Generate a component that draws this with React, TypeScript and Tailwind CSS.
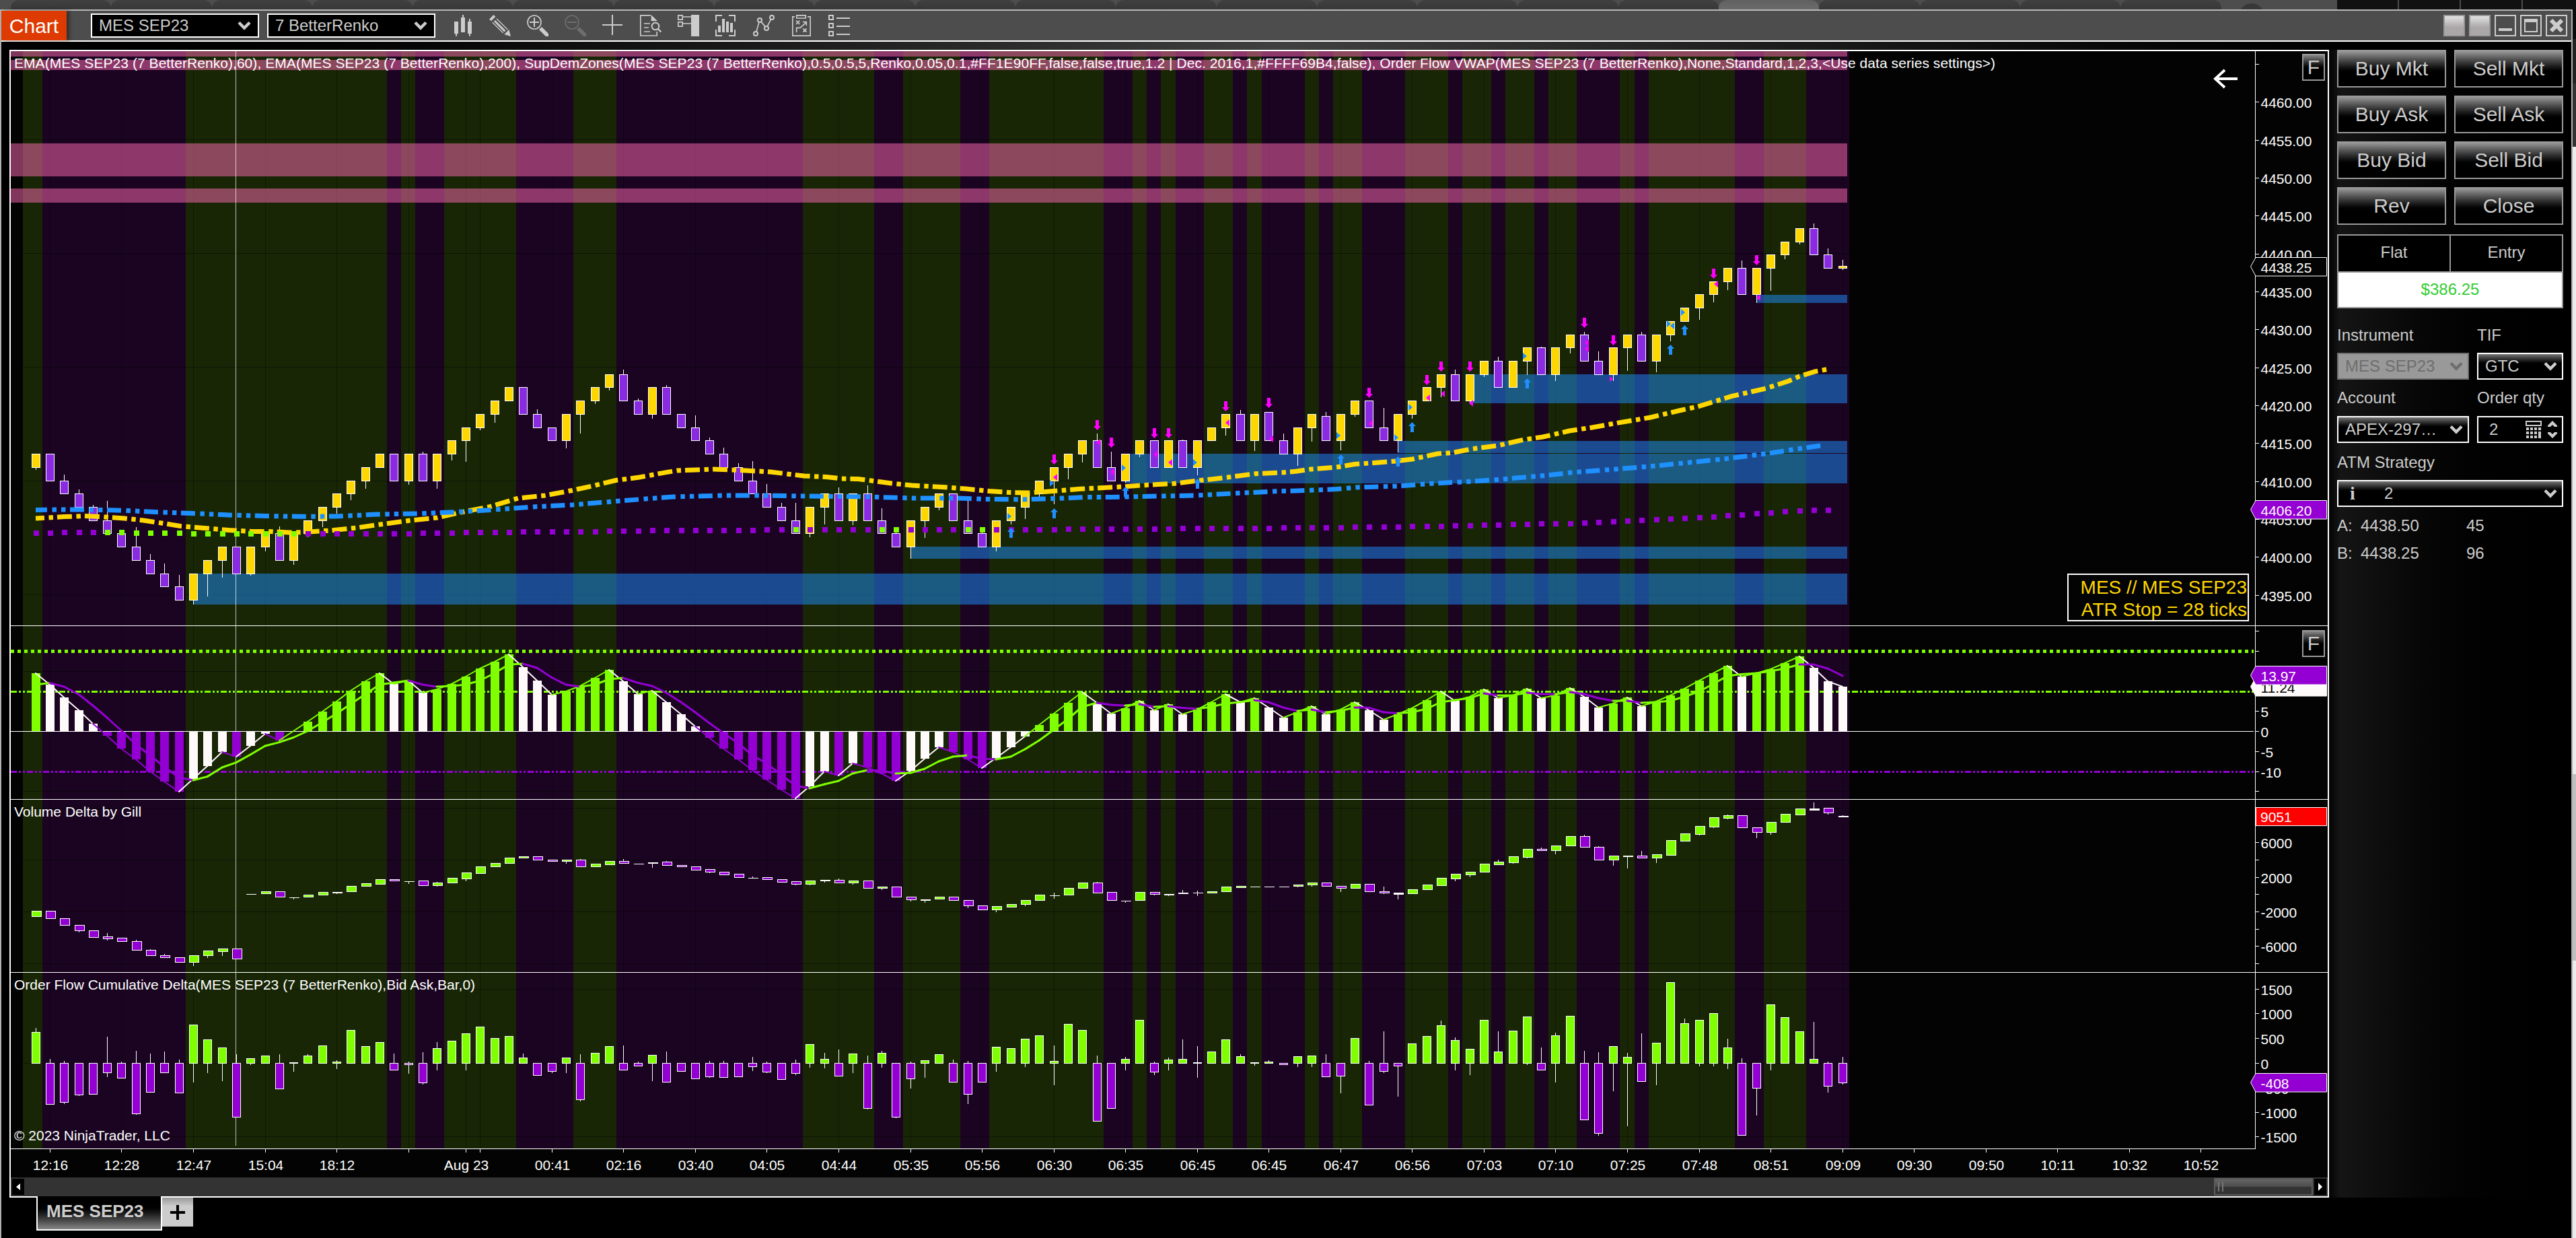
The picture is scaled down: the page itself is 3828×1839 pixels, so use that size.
import type { ReactNode } from "react";

const STEP = 21.31;
const LEFT = 16;
const AXIS = 3351;
const barX = (i: number) => Math.round(52.6 + i * STEP);

const GREEN = "#7fff00";
const PURPLE = "#9400d3";
const SNOW = "#fffafa";

// lengths of the alternating green / purple background runs, in bars
const runs = [
  1, 10, 14, 1, 1, 2, 5, 4, 3, 13, 5, 2, 4, 2, 8, 2, 1, 1, 1, 2, 2, 1, 1, 3, 1, 1, 2, 3, 3, 1, 2, 1, 2, 1, 2, 3, 1, 1,
  6, 2, 3, 3,
];

// renko bars: [up, bottom brick, top brick, upper wick, lower wick]
const bricks: number[][] = [
  [1, 10, 11, 0, 3], [0, 9, 11, 0, 0], [0, 8, 9, 10, 0], [0, 7, 8, 7, 0], [0, 6, 7, 4, 0], [0, 5, 6, 30, 0],
  [0, 4, 5, 0, 0], [0, 3, 4, 30, 0], [0, 2, 3, 10, 0], [0, 1, 2, 16, 0], [0, 0, 1, 18, 0], [1, 0, 2, 0, 6],
  [1, 2, 3, 0, 33], [1, 3, 4, 0, 25], [0, 2, 4, 0, 0], [1, 2, 4, 0, 2], [1, 4, 5, 0, 6], [0, 3, 5, 11, 0],
  [1, 3, 5, 0, 6], [1, 5, 6, 0, 5], [1, 6, 7, 0, 9], [1, 7, 8, 0, 9], [1, 8, 9, 0, 9], [1, 9, 10, 0, 11],
  [1, 10, 11, 0, 0], [0, 9, 11, 0, 0], [1, 9, 11, 0, 5], [0, 9, 11, 4, 0], [1, 9, 11, 0, 11], [1, 11, 12, 0, 9],
  [1, 12, 13, 0, 31], [1, 13, 14, 0, 3], [1, 14, 15, 0, 12], [1, 15, 16, 0, 0], [0, 14, 16, 0, 0], [0, 13, 14, 8, 0],
  [0, 12, 13, 0, 0], [1, 12, 14, 0, 11], [1, 14, 15, 0, 28], [1, 15, 16, 0, 4], [1, 16, 17, 0, 4], [0, 15, 17, 8, 0],
  [0, 14, 15, 4, 0], [1, 14, 16, 0, 6], [0, 14, 16, 4, 0], [0, 13, 14, 0, 0], [0, 12, 13, 19, 0], [0, 11, 12, 5, 0],
  [0, 10, 11, 10, 0], [0, 9, 10, 7, 0], [0, 8, 9, 30, 0], [0, 7, 8, 15, 0], [0, 6, 7, 7, 0], [0, 5, 6, 27, 0],
  [1, 5, 7, 0, 5], [1, 7, 8, 0, 25], [0, 6, 8, 10, 0], [1, 6, 8, 0, 6], [0, 6, 8, 13, 0], [0, 5, 6, 19, 0],
  [0, 4, 5, 2, 0], [1, 4, 6, 0, 17], [1, 6, 7, 0, 25], [1, 7, 8, 0, 4], [0, 6, 8, 0, 0], [0, 5, 6, 30, 0],
  [0, 4, 5, 2, 0], [1, 4, 6, 0, 6], [1, 6, 7, 0, 5], [1, 7, 8, 0, 17], [1, 8, 9, 0, 9], [1, 9, 10, 0, 34],
  [1, 10, 11, 0, 17], [1, 11, 12, 0, 12], [0, 10, 12, 11, 0], [0, 9, 10, 24, 0], [1, 9, 11, 0, 2], [1, 11, 12, 0, 4],
  [0, 10, 12, 0, 0], [1, 10, 12, 0, 0], [0, 10, 12, 2, 0], [1, 10, 12, 0, 11], [1, 12, 13, 0, 0], [1, 13, 14, 0, 11],
  [0, 12, 14, 7, 0], [1, 12, 14, 0, 15], [0, 12, 14.15, 1, 0], [0, 11, 12, 11, 0], [1, 11, 13, 0, 17], [1, 13, 14, 0, 20],
  [0, 12, 13.85, 7, 0], [1, 12, 14, 0, 14], [1, 14, 15, 0, 3], [0, 13, 15, 0, 0], [0, 12, 13, 30, 0], [1, 12, 14, 0, 17],
  [1, 14, 15, 0, 6], [1, 15, 16, 0, 0], [1, 16, 17, 0, 14], [0, 15, 17, 8, 0], [1, 15, 17, 0, 2], [1, 17, 18, 0, 3],
  [0, 16, 18, 7, 0], [1, 16, 18, 0, 0], [1, 18, 19, 0, 20], [0, 17, 19, 2, 0], [1, 17, 19, 0, 9], [1, 19, 20, 0, 8],
  [0, 18, 20, 5, 0], [0, 17, 18, 15, 0], [1, 17, 19, 0, 9], [1, 19, 20, 0, 34], [0, 18, 20, 5, 0], [1, 18, 20, 0, 16],
  [1, 20, 21, 0, 9], [1, 21, 22, 0, 0], [1, 22, 23, 0, 17], [1, 23, 24, 0, 11], [1, 24, 25, 0, 12], [0, 23, 25, 12, 0],
  [1, 23, 25, 0, 12], [1, 25, 26, 0, 33], [1, 26, 27, 0, 6], [1, 27, 28, 0, 3], [0, 26, 28, 8, 0], [0, 25, 26, 10, 0],
  [1, 25, 25.15, 10, 2],
];
const brickY = (k: number) => Math.round(892 - k * 19.72);

const demandZones = [
  [287, 852, 46],
  [1353, 812, 18],
  [1672, 674, 44],
  [2077, 655, 18],
  [2184, 556, 43],
  [2610, 438, 12],
];
const supplyZones = [
  [76, 8],
  [89, 15],
  [213, 49],
  [280, 21],
];

const ema60 =
  "53,770 95,767.6 125,766.5 150,767.6 185,770 213,773 240,777 268,781.5 310,785 340,787.5 374,789.4 400,789.4 430,791 450,790.6 490,788 530,784 565,779 610,773 650,769 685,761 728,752.6 770,740 810,736 850,728.5 880,722 915,713.5 950,709 990,701.6 1006,699 1060,697 1100,698.5 1145,701 1195,707 1228,708.4 1250,711 1275,711.5 1292,713.6 1325,718 1355,721 1400,723.5 1435,726 1470,729.6 1500,731.5 1530,732 1565,729.6 1605,726.3 1660,723.5 1700,720.7 1745,718.3 1780,714 1810,710.8 1840,707 1865,703.7 1905,702 1927,700 1948,697 1988,693.7 2013,689.6 2035,688 2074,685 2099,682 2136,674 2158,672.6 2186,667 2225,662 2265,653 2293,649 2332,640 2366,635 2399,629 2453,620 2495,610 2523,604 2573,588.7 2624,577 2658,566 2674,559 2697,552 2718,548";
const ema200 =
  "53,757.4 90,757 125,757 165,757.8 190,758.6 230,760.5 285,762.5 340,765 395,766.5 450,767.3 500,767 560,764 620,763 680,760.5 730,757.4 790,753 850,750 910,745 960,741 1000,738 1075,736 1130,736 1180,736.7 1290,738 1355,740 1420,740 1460,741.4 1520,742 1570,740.5 1610,738.6 1650,738.6 1690,737.7 1780,735.8 1840,732.5 1900,729.6 1927,729 1986,726.6 2015,724 2080,722 2130,718 2190,715 2225,712.5 2300,706 2340,701.4 2400,697 2450,693 2510,687 2560,682 2624,674 2670,667 2712,661";

// vwap anchors, [bar, y]
const vwap = [
  [0, 792], [3, 791], [5, 791], [12, 793], [18, 792.5], [19, 793], [25, 793], [32, 790.6], [38, 790], [44, 788], [56, 787],
  [66, 787], [76, 786], [86, 784.5], [91, 783.5], [97, 782], [101, 780], [107, 777.7], [112, 773], [116, 769], [120, 763],
  [123, 759], [125, 757.7],
];
const vwapUp = [53, 59, 60, 65, 66];
const vwapY = (i: number) => {
  const n = vwap.findIndex((p) => p[0] >= i);
  if (n <= 0) return vwap[0][1];
  const [a, b] = [vwap[n - 1], vwap[n]];
  return a[1] + ((b[1] - a[1]) * (i - a[0])) / (b[0] - a[0]);
};

const sells = [
  [71, 675], [74, 624], [75, 650], [78, 636], [79, 636], [83, 596], [86, 591], [93, 576], [97, 557], [98, 537],
  [100, 537], [108, 472], [110, 498], [117, 399], [120, 379],
];
const buys = [
  [68, 784], [71, 755], [76, 723], [81, 711], [91, 675], [95, 678], [96, 627], [104, 562], [114, 512], [115, 483],
];
const sellFills = [
  [1568, 709], [1632, 657], [1653, 701], [1717, 675], [1739, 687], [1824, 628], [1889, 652], [2037, 629], [2122, 591],
  [2144, 585], [2186, 599], [2358, 509], [2358, 518], [2550, 422], [2613, 442],
];
const buyFills = [
  [1500, 767], [1563, 718], [1670, 695], [1776, 687], [1989, 647], [2075, 650], [2096, 605], [2266, 529], [2480, 481],
  [2501, 464],
];

// oscillator: [color key, height above zero in px]
const hist =
  "g86 w69 w50 w31 w11 p-7 p-26 p-42 p-60 p-75 p-90 w-71 w-52 w-31 p-38 w-22 w-4 p-14 g0 g14 g29 g44 g60 g74 g86 w70 g75 w57 g62 g70 g81 g93 g103 g114 w95 w75 w54 g59 g67 g79 g91 w74 w55 g60 w43 w25 w7 p-10 p-26 p-42 p-58 p-72 p-87 p-100 w-82 w-60 p-66 w-48 p-54 p-63 p-74 w-59 w-41 w-24 p-31 p-42 p-55 w-40 w-24 w-8 g9 g26 g42 g58 w42 w26 g34 g45 w31 g40 w25 g32 g43 g55 w43 g49 w35 w20 g28 g37 w25 g32 g43 w31 w17 g25 g34 g46 g59 w45 g51 g62 w49 g53 g63 w49 g53 g64 w51 w35 g41 g50 w37 g44 g53 g63 g75 g86 g97 w81 g86 g92 g101 g111 w94 w74 w66"
    .split(" ")
    .map((t) => ({ c: t[0] === "g" ? GREEN : t[0] === "w" ? SNOW : PURPLE, v: Number(t.slice(1)) }));
const signal = [
  69, 71.5, 66, 54.5, 38, 20, 1, -20, -36, -53, -69, -73, -67.6, -54, -46.6, -35, -22, -16.6, -9.5, 0, 13, 26, 40, 55, 69,
  72, 75, 69, 66, 67, 69, 75, 86, 99, 100, 94, 79.5, 69, 66, 69, 77, 79, 71.6, 67, 57, 43, 28, 12, -3, -18, -36, -48, -65,
  -81, -85, -79, -74, -63, -58, -59, -63, -62, -56, -45, -38, -36, -41, -42, -38, -27, -14, 2, 18, 36, 42, 39, 38, 40, 36,
  37, 34.5, 33, 36, 41, 43, 46, 43, 35, 30, 32, 28, 30, 35, 34.8, 28, 26.4, 28, 33, 43, 46, 49, 56, 53, 53.1, 57, 55, 54.8,
  58, 55, 49, 45, 45.1, 42, 43, 45, 51, 59, 70, 82, 84.5, 86, 89, 93, 99, 98.9, 93, 82,
];

// cumulative volume delta bars: color, top, bottom, upper wick, lower wick
const volume =
  "g415,434 p415,441 p441,465 p465,484,0,4 p484,506 p505,511,15,4 p510,520 p520,551,6 p551,570,4 p570,577,6 p577,594 g570,594,0,13 g555,570,0,8 g546,556,0,14 p546,582 w351,353,0,3 g346,351 p346,363,3 w363,363,0,6 g358,363 g348,358 w346,348,0,4 g327,346 g317,327 g303,318 p303,308,3 w308,308,0,9 p308,323,3 g313,323,4,4 g298,313 g279,299,0,6 g258,280 g244,258 g227,244 g222,227 p222,232 p232,237 g232,237,0,6 p232,256,4 g248,256 g239,249 p239,244,10 w244,244 w241,243,0,16 p241,251,5 p251,258 p258,268 p267,275,0,3 p275,285 p284,294 w294,296,4,4 p296,301 p301,311 p310,318,0,3 g306,318,0,3 w303,305,0,7 p304,313,6 g306,313,0,5 p306,334 g329,334,0,4 p329,363 p363,373,0,5 w370,373,0,10 g365,370 p365,377 p377,396,0,8 p396,408 g398,408,0,6 g389,399 g375,389,0,4 g358,375 w356,358,9,13 g332,356 g313,332 p313,349,4 p348,377 w375,376,0,7 g348,375 p348,354,0,3 w351,354,0,5 w348,350,10 w348,348,8,11 g344,349 g329,344 g325,330 w325,325,0,3 w325,325 w325,325 g320,325,0,3 g315,320,0,4 p315,325,3 p325,332,0,13 g318,332 p318,344 p344,349,18,3 w347,351,0,20 g339,351 g322,339 g298,323 g284,299,0,6 g275,285,0,8 g248,275 g241,249,10 g222,242,0,3 g194,223,0,3 p194,199,8 g182,199,0,13 g151,182 p151,187,6 p187,232,4 g220,232,0,18 w217,219,0,44 p218,227,18 g215,227,0,16 g165,216 g141,166,3 g115,142,0,3 g84,116,0,3 g75,85,4,3 p75,120 p120,135,0,20 g101,135,0,8 g72,101 g53,73 w51,54,22 p51,66,0,5 w77,78,3"
    .split(" ")
    .map((t) => ({ key: t[0], n: t.slice(1).split(",").map((v) => Number(v) / 2.379) }));

// order flow delta per bar: close, high, low
const flow =
  "110,123 -145,14 -138,6,-144 -112,0,-117 -109,0,-113 -33,92,-51 -52,5 -179,42,-182 -102,33,-105 -33,40,-36 -104,11 136,0,-70 84,0,-36 55,0,-65 -190,30 17,0,-8 27 -90,30 3,0,-32 27,30 62 5,9,-22 117 60 74 -24,33,-27 -5,4,-39 -69,37,-75 53,73,-25 79 105,0,-27 129 89 96 20,33 -43,0,-46 -28,0,-36 20,0,-36 -128,30,-136 36 60 -24,61 -9,4 29,0,-65 -67,40 -28 -54 -47,6,-53 -49,6,-53 -47 -12,21,-29 -31,4,-36 -57 -35,11,-43 67,0,-17 15,35,-20 -45,47 34,0,-36 -159,25,-163 36,42,-17 -190,0,-196 -54,4,-91 10,0,-53 32 -67,11 -109,6,-144 -67,0,-70 58,0,-32 53 86,0,-15 98 8,61,-79 139 117 -204,25,-208 -159 15,21,-27 153 -31,4,-43 13,18,-27 15,83 3,59,-53 41 84 24,30 3,0,-10 5,9 -5 24,0,-15 27,0,-15 -47,30 -45,0,-108 89 -147,6 -28,111,-36 -9,0,-120 70 96 134,149 82,90,-27 51,0,-44 153 41,111 115,0,-3 165,0,-8 -24,54,-27 98,106,-70 167 -200,42,-203 -247,37,-258 60,0,-101 22,35,-224 -64,104 72,0,-79 286 141,156 153,0,-13 177,0,-13 55,85,-22 -254,16 -88,0,-186 208,0,-27 162 112 15,144 -81,4,-105 -69,21,-77"
    .split(" ")
    .map((t) => t.split(",").map((v) => Number(v) / 2.379));

const times: [number, string][] = [
  [1, "12:16"], [6, "12:28"], [11, "12:47"], [16, "15:04"], [21, "18:12"], [26, ""], [30, "Aug 23"], [31, ""],
  [36, "00:41"], [41, "02:16"], [46, "03:40"], [51, "04:05"], [56, "04:44"], [61, "05:35"], [66, "05:56"],
  [71, "06:30"], [76, "06:35"], [81, "06:45"], [86, "06:45"], [91, "06:47"], [96, "06:56"], [101, "07:03"],
  [106, "07:10"], [111, "07:25"], [116, "07:48"], [121, "08:51"], [126, "09:09"], [131, "09:30"], [136, "09:50"],
  [141, "10:11"], [146, "10:32"], [151, "10:52"],
];

type Tick = [number, string];

const Bands = ({ y, h, grid }: { y: number; h: number; grid: number[] }) => {
  let at = 0;
  return (
    <g>
      {runs.map((n, k) => {
        const x0 = k === 0 ? 34 : 42 + at * STEP;
        at += n;
        const x1 = 42 + at * STEP;
        return (
          <rect key={k} x={Math.round(x0)} y={y} width={Math.round(x1) - Math.round(x0)} height={h} fill={k % 2 ? "#1a0421" : "#182605"} />
        );
      })}
      {grid.map((g) => (
        <rect key={g} x={34} y={g} width={2715} height={1} fill="#000" opacity={0.4} />
      ))}
      {times
        .filter(([i]) => i < 127)
        .map(([i]) => (
          <rect key={i} x={barX(i)} y={y} width={1} height={h} fill="#000" opacity={0.3} />
        ))}
    </g>
  );
};

const Panel = ({ y, h, grid, ticks, last, children }: { y: number; h: number; grid: number[]; ticks: Tick[]; last?: boolean; children: ReactNode }) => (
  <svg className="block shrink-0" width={3443} height={h} viewBox={`${LEFT} ${y} 3443 ${h}`} shapeRendering="crispEdges">
    <Bands y={y} h={h} grid={grid} />
    {children}
    <rect x={LEFT} y={y + h - 1} width={last ? AXIS - LEFT + 1 : 3443} height={1} fill="#fff" />
    <rect x={AXIS} y={y} width={1} height={h} fill="#fff" />
    {ticks.map(([ty, label]) => (
      <g key={ty}>
        <rect x={AXIS} y={ty} width={6} height={1} fill="#fff" />
        <text x={3359.5} y={ty + 8.5} fontSize={21} fill="#fff">
          {label}
        </text>
      </g>
    ))}
  </svg>
);

const Tag = ({ y, color, text, label }: { y: number; color: string; text?: string; label: string }) => (
  <svg className="absolute left-[3328px] block" style={{ top: y - 76 }} width={115} height={29} viewBox="0 0 115 29">
    <path d="M0.5 14L8 0.5H113.5V28H8Z" fill={color} stroke="#fff" />
    <text x={15.5} y={22.5} fontSize={21} fill={text ?? "#fff"}>
      {label}
    </text>
  </svg>
);

const SessionLine = ({ y, h }: { y: number; h: number }) => <rect x={350} y={y} width={1} height={h} fill="#fff" opacity={0.7} />;

const priceTicks: Tick[] = [[95, ""]];
for (let k = 0; k <= 13; k++) priceTicks.push([Math.round(151.4 + k * 56.34), `${4460 - k * 5}.00`]);

const PricePanel = () => (
  <Panel y={76} h={854} grid={[207, 376, 545, 714, 883]} ticks={priceTicks}>
    {supplyZones.map(([y, h]) => (
      <rect key={y} x={16} y={y} width={2729} height={h} fill="#ff69b4" opacity={0.5} />
    ))}
    {demandZones.map(([x, y, h]) => (
      <rect key={x} x={x} y={y} width={2745 - x} height={h} fill="#1e90ff" opacity={0.5} />
    ))}
    <SessionLine y={76} h={854} />
    {bricks.map(([up, lo, hi, uw, lw], i) => {
      const x = barX(i);
      const [y0, y1] = [brickY(hi), brickY(lo)];
      return (
        <g key={i}>
          {(uw > 0 || lw > 0) && <rect x={x} y={y0 - uw} width={1} height={y1 - y0 + uw + lw} fill="#fff" />}
          <rect x={x - 5.5} y={y0 - 0.5} width={12} height={y1 - y0} fill={up ? "#ffd700" : "#8a2be2"} stroke="#fff" />
        </g>
      );
    })}
    <g shapeRendering="auto" fill="none" strokeWidth={7}>
      <polyline points={ema60} stroke="#ffd700" strokeDasharray="22 6.5 6.5 6" strokeDashoffset={9} />
      <polyline points={ema200} stroke="#1e90ff" strokeDasharray="21 7.5 6.5 7 6.5 6.5" strokeDashoffset={4} />
    </g>
    {Array.from({ length: 126 }, (_, i) => (
      <rect
        key={i}
        x={barX(i) - 3}
        y={Math.round(vwapY(i) - 4)}
        width={8}
        height={8}
        fill={(i > 4 && i < 19) || vwapUp.includes(i) ? GREEN : PURPLE}
      />
    ))}
    <g shapeRendering="auto">
      {sells.map(([i, y]) => (
        <path key={i} fill="#ff00ff" d={`M${barX(i) - 2} ${y}h5v9h3l-5.5 6l-5.5 -6h3z`} />
      ))}
      {buys.map(([i, y]) => (
        <path key={i} fill="#1e90ff" d={`M${barX(i) - 2} ${y + 15}h5v-9h3l-5.5 -6l-5.5 6h3z`} />
      ))}
      {sellFills.map(([x, y]) => (
        <path key={`${x}-${y}`} fill="#ff00ff" d={`M${x - 3} ${y}l6 -5v10z`} />
      ))}
      {buyFills.map(([x, y]) => (
        <path key={`${x}-${y}`} fill="#1e90ff" d={`M${x + 3} ${y}l-6 -5v10z`} />
      ))}
      <path fill="#ff00ff" d="M2397 563l-5 -4v8z" />
      <path fill="#1e90ff" d="M2482 484l6 -5v10z" />
      <path d="M3325 117H3292M3306 104L3292 117L3306 130" fill="none" stroke="#fff" strokeWidth={4} />
    </g>
    <text x={21} y={101} fontSize={21} fill="#fff" textLength={2944}>
      {"EMA(MES SEP23 (7 BetterRenko),60), EMA(MES SEP23 (7 BetterRenko),200), SupDemZones(MES SEP23 (7 BetterRenko),0.5,0.5,5,Renko,0.05,0.1,#FF1E90FF,false,false,true,1.2 | Dec. 2016,1,#FFFF69B4,false), Order Flow VWAP(MES SEP23 (7 BetterRenko),None,Standard,1,2,3,<Use data series settings>)"}
    </text>
    <rect x={3073} y={853} width={268} height={69} fill="#030303" stroke="#fff" strokeWidth={2} />
    <g fontSize={28} fill="#ffd700" textAnchor="end">
      <text x={3339} y={882}>MES // MES SEP23</text>
      <text x={3339} y={915}>ATR Stop = 28 ticks</text>
    </g>
  </Panel>
);

const ZERO = 1086;

const OscillatorPanel = () => (
  <Panel
    y={930}
    h={258}
    grid={[997, 1175]}
    ticks={[[937, ""], [967, ""], [1056, "5"], [1086, "0"], [1116, "-5"], [1146, "-10"], [1175, ""]]}
  >
    <SessionLine y={930} h={258} />
    <line x1={16} x2={3349} y1={967.5} y2={967.5} stroke={GREEN} strokeWidth={5} strokeDasharray="5 5" />
    <line x1={16} x2={3349} y1={1027.5} y2={1027.5} stroke={GREEN} strokeWidth={3} strokeDasharray="9 3 3 3 3 3" />
    <line x1={16} x2={3349} y1={1146.5} y2={1146.5} stroke={PURPLE} strokeWidth={3} strokeDasharray="9 3 3 3 3 3" />
    {hist.map(({ c, v }, i) => (
      <rect key={i} x={barX(i) - 6} y={v > 0 ? ZERO - v : ZERO} width={13} height={Math.abs(v)} fill={c} />
    ))}
    <rect x={16} y={ZERO} width={3333} height={1} fill="#fff" />
    <g shapeRendering="auto" strokeLinecap="round">
      {hist.slice(1).map(({ c, v }, i) => (
        <line key={i} x1={barX(i)} y1={ZERO - hist[i].v} x2={barX(i + 1)} y2={ZERO - v} stroke={c} strokeWidth={2} />
      ))}
      {signal.slice(1).map((v, i) => (
        <line
          key={i}
          x1={barX(i)}
          y1={ZERO - signal[i]}
          x2={barX(i + 1)}
          y2={ZERO - v}
          stroke={v > signal[i] ? GREEN : PURPLE}
          strokeWidth={3}
        />
      ))}
    </g>
  </Panel>
);

const VolumePanel = () => (
  <Panel
    y={1188}
    h={257}
    grid={[1200, 1277, 1354, 1431]}
    ticks={[[1251, "6000"], [1277, ""], [1303, "2000"], [1328, ""], [1354, "-2000"], [1380, ""], [1405, "-6000"], [1431, ""]]}
  >
    <SessionLine y={1188} h={257} />
    {volume.map(({ key, n: [a, b, uw = 0, lw = 0] }, i) => {
      const x = barX(i);
      const y0 = Math.round(1180 + a);
      const h = Math.round(1180 + b) - y0;
      return (
        <g key={i}>
          {(uw > 0 || lw > 0) && <rect x={x} y={y0 - Math.round(uw)} width={1} height={h + Math.round(uw + lw)} fill="#fff" />}
          {key === "w" ? (
            <rect x={x - 6} y={y0} width={15} height={Math.max(1, h + 1)} fill="#fff" />
          ) : (
            <rect x={x - 5.5} y={y0 - 0.5} width={14} height={Math.max(2, h)} fill={key === "g" ? GREEN : PURPLE} stroke="#fff" />
          )}
        </g>
      );
    })}
    <text x={21} y={1213} fontSize={21} fill="#fff">
      Volume Delta by Gill
    </text>
  </Panel>
);

const FLOW_ZERO = 1579;

const FlowPanel = () => (
  <Panel
    y={1445}
    h={262}
    grid={[1469, 1579, 1688]}
    last
    ticks={[[1469, "1500"], [1505, "1000"], [1542, "500"], [1579, "0"], [1616, "-500"], [1652, "-1000"], [1688, "-1500"]]}
  >
    <SessionLine y={1445} h={257} />
    {flow.map(([c, hi = 0, lo = 0], i) => {
      const x = barX(i);
      const top = FLOW_ZERO - Math.round(Math.max(c, 0));
      const bottom = FLOW_ZERO - Math.round(Math.min(c, 0));
      const wickTop = Math.min(top, FLOW_ZERO - Math.round(hi));
      const wickBottom = Math.max(bottom, FLOW_ZERO - Math.round(lo));
      return (
        <g key={i}>
          <rect x={x} y={wickTop} width={1} height={wickBottom - wickTop} fill="#fff" />
          <rect x={x - 5.5} y={top + 0.5} width={12} height={Math.max(1, bottom - top)} fill={c > 0 ? GREEN : PURPLE} stroke="#fff" />
        </g>
      );
    })}
    <text x={21} y={1470} fontSize={21} fill="#fff">
      Order Flow Cumulative Delta(MES SEP23 (7 BetterRenko),Bid Ask,Bar,0)
    </text>
    <text x={21} y={1694} fontSize={21} fill="#fff">
      © 2023 NinjaTrader, LLC
    </text>
  </Panel>
);

const TimeAxis = () => (
  <svg className="block shrink-0" width={3443} height={42} viewBox="16 1707 3443 42">
    {times.map(([i, label]) => (
      <g key={i}>
        <rect x={barX(i)} y={1707} width={1} height={5} fill="#fff" />
        <text x={barX(i) + 1} y={1738} fontSize={21} fill="#fff" textAnchor="middle">
          {label}
        </text>
      </g>
    ))}
  </svg>
);

const ScrollBar = () => (
  <div className="flex h-7 items-center justify-between bg-[#333] px-[2px]">
    <div className="flex h-6 w-[18px] items-center justify-center bg-black">
      <div className="border-y-[5px] border-r-[6px] border-y-transparent border-r-white" />
    </div>
    <div className="flex items-center gap-[2px]">
      <div className="flex h-[26px] w-[147px] items-center gap-[4px] border-2 border-[#5c5c5c] bg-linear-to-b from-[#666] from-0% via-[#4a4a4a] via-50% to-[#333] to-50% pl-1">
        <div className="h-3.5 w-[2px] bg-[#777]" />
        <div className="h-3.5 w-[2px] bg-[#777]" />
      </div>
      <div className="flex h-6 w-[18px] items-center justify-center bg-black">
        <div className="border-y-[6px] border-l-[6px] border-y-transparent border-l-white" />
      </div>
    </div>
  </div>
);

const FButton = ({ className }: { className: string }) => (
  <div className={`absolute left-[3405px] flex h-[40px] w-[34px] items-center justify-center border-2 border-[#999] bg-linear-to-b from-[#888] to-black to-60% text-[30px] leading-none text-[#ccc] ${className}`}>
    F
  </div>
);

const Chart = () => (
  <div className="relative flex h-[1705px] w-[3447px] flex-col border-2 border-white bg-[#030303]">
    <PricePanel />
    <OscillatorPanel />
    <VolumePanel />
    <FlowPanel />
    <TimeAxis />
    <ScrollBar />

    {/* markers over the price axis */}
    <Tag y={382} color="#030303" label="4438.25" />
    <Tag y={743} color={PURPLE} label="4406.20" />
    <Tag y={1006} color={SNOW} text="#000" label="11.24" />
    <Tag y={989} color={PURPLE} label="13.97" />
    <Tag y={1594} color={PURPLE} label="-408" />
    <div className="absolute left-[3336px] top-[1123px] h-7 w-[106px] border border-white bg-[#ff0000] pl-[6px] text-[21px] leading-[27px] text-white">
      9051
    </div>
    <FButton className="top-[4px]" />
    <FButton className="top-[860px]" />
  </div>
);

const Chevron = ({ className = "text-[#ccc]" }: { className?: string }) => (
  <svg className={className} width={20} height={14} viewBox="0 0 20 14" fill="none" stroke="currentColor" strokeWidth={4.5}>
    <path d="M2 2.5L10 10.5L18 2.5" />
  </svg>
);

const icons: ReactNode[] = [
  <g fill="currentColor">
    <path d="M12 30H30V84H24V95H18V84H12ZM48 0H54V12H60V78H42V12H48ZM78 18H84V30H90V84H84V95H78V84H72V30H78Z" />
  </g>,
  <g fill="currentColor">
    <path d="M0 20L19 0L28 8L9 28ZM96 96L67 87L88 66Z" />
    <path d="M14 33L62 81M24 27L70 73M33 17L82 66" fill="none" stroke="currentColor" strokeWidth={4} />
    <path d="M24 27L70 73" stroke="currentColor" strokeWidth={9} />
  </g>,
  <g>
    <circle cx={33} cy={33} r={30} fill="none" stroke="currentColor" strokeWidth={5} />
    <path d="M12 33H54M33 12V54" stroke="currentColor" strokeWidth={6} />
    <path d="M54 66L66 54L96 84V96H84Z" fill="currentColor" />
  </g>,
  <g className="text-[#6e6e6e]">
    <circle cx={33} cy={33} r={30} fill="none" stroke="currentColor" strokeWidth={5} />
    <path d="M12 33H54" stroke="currentColor" strokeWidth={6} />
    <path d="M54 66L66 54L96 84V96H84Z" fill="currentColor" />
  </g>,
  <path d="M0 45H90M45 0V90" stroke="currentColor" strokeWidth={6} />,
  <g fill="none" stroke="currentColor" strokeWidth={5}>
    <path d="M48 2.5H2.5V93H75.5V75M18 39H45M18 57H39M18 75H45" />
    <path d="M50 0L78 28H50Z" fill="currentColor" stroke="none" />
    <circle cx={69} cy={51} r={16} strokeWidth={6} />
    <path d="M80 63L94 76" strokeWidth={7} />
  </g>,
  <g fill="none" stroke="currentColor" strokeWidth={5}>
    <path d="M2.5 2.5H21.5V21.5H2.5ZM2.5 32.5H21.5V51.5H2.5ZM21 9H62M21 39H62" />
    <path d="M60 0H96V96H60Z" fill="currentColor" stroke="none" />
  </g>,
  <g fill="none" stroke="currentColor" strokeWidth={6}>
    <path d="M3 30V3H30M60 3H87V30M3 66V93H30M60 93H87V66" />
    <path d="M12 48H24V78H12ZM30 18H42V78H30ZM48 30H60V78H48ZM66 36H78V78H66Z" fill="currentColor" stroke="none" />
  </g>,
  <g fill="none" stroke="currentColor" strokeWidth={6}>
    <circle cx={12} cy={84} r={9} />
    <circle cx={30} cy={24} r={9} />
    <circle cx={60} cy={60} r={9} />
    <circle cx={84} cy={12} r={9} />
    <path d="M15 75L27 33M36 31L55 53M64 51L80 20" strokeWidth={5} />
  </g>,
  <g fill="none" stroke="currentColor" strokeWidth={5}>
    <path d="M18 8.5H8.5V93.5H87.5V8.5H75M26.5 2.5H66.5V15H26.5Z" />
    <path d="M24 26L40 42M40 26L24 42M55 61L71 77M71 61L55 77M26 78V58H42L68 35M54 32H70V48" />
  </g>,
  <g fill="none" stroke="currentColor" strokeWidth={6}>
    <path d="M3 3H21V21H3ZM3 39H21V57H3ZM3 75H21V93H3ZM36 15H96M36 51H96M36 87H96" />
  </g>,
];

const TitleBar = () => (
  <div className="flex h-[48px] items-center border-y-2 border-t-[#b8b8b8] border-b-white bg-[#4d4d4d]">
    <div className="flex h-[44px] w-[97px] items-center justify-center bg-[#dd3b02] text-[30px] text-white shadow-[4px_0_5px_rgba(0,0,0,0.4)]">
      Chart
    </div>
    <div className="ml-[36px] flex gap-3">
      {["MES SEP23", "7 BetterRenko"].map((label) => (
        <div key={label} className="flex h-9 w-[250px] items-center justify-between border-2 border-white bg-black pl-2.5 pr-2.5 text-[24px] text-[#ccc]">
          {label}
          <Chevron />
        </div>
      ))}
    </div>
    <div className="ml-6 flex gap-6 text-[#ccc]">
      {icons.map((icon, i) => (
        <svg key={i} width={32} height={32} viewBox="0 0 96 96">
          {icon}
        </svg>
      ))}
    </div>
    <div className="ml-auto mr-[6px] flex gap-[6px] text-[#ccc]">
      <div className="size-8 border-2 border-[#999] bg-linear-to-b from-[#e2e2e2] to-[#aba7a8] to-60%" />
      <div className="size-8 border-2 border-[#999] bg-linear-to-b from-[#e2e2e2] to-[#aba7a8] to-60%" />
      <div className="flex size-8 items-end justify-center border-2 border-[#ccc] pb-[6px]">
        <div className="h-[4px] w-5 bg-[#ccc]" />
      </div>
      <div className="flex size-8 items-center justify-center border-2 border-[#ccc]">
        <div className="h-5 w-5 border-2 border-t-[5px] border-[#ccc]" />
      </div>
      <div className="flex size-8 items-center justify-center border-2 border-[#ccc]">
        <svg width={20} height={20} viewBox="0 0 20 20" stroke="currentColor" strokeWidth={6}>
          <path d="M2 2L18 18M18 2L2 18" />
        </svg>
      </div>
    </div>
  </div>
);

const field = "flex h-10 items-center justify-between border-2 px-[10px]";
const dark = "border-white bg-linear-to-b from-[#777] to-black to-45%";

const OrderPanel = () => (
  <div className="w-[336px] text-[24px] leading-7 text-[#ccc]">
    <div className="grid grid-cols-2 gap-3">
      {["Buy Mkt", "Sell Mkt", "Buy Ask", "Sell Ask", "Buy Bid", "Sell Bid", "Rev", "Close"].map((label) => (
        <div key={label} className="flex h-14 items-center justify-center border-2 border-[#999] bg-linear-to-b from-[#999] to-black to-65% text-[30px]">
          {label}
        </div>
      ))}
    </div>

    {/* position and pnl */}
    <div className="mt-[14px] h-[110px] border-2 border-[#999] bg-black text-center">
      <div className="flex h-[53px] leading-[49px]">
        <div className="w-[167px] border-r-2 border-[#999]">Flat</div>
        <div className="flex-1">Entry</div>
      </div>
      <div className="h-[53px] border-t-2 border-[#999] bg-white leading-[49px] text-[#32cd32]">$386.25</div>
    </div>

    <div className="mt-[25px] grid grid-cols-[196px_128px] gap-x-3">
      <div className="h-[41px] pt-px">Instrument</div>
      <div className="h-[41px] pt-px">TIF</div>
      <div className={`${field} border-[#707070] bg-[#999] text-[#6e6e6e]`}>
        MES SEP23
        <Chevron className="-mr-[3px] text-[#6e6e6e]" />
      </div>
      <div className={`${field} ${dark}`}>
        GTC
        <Chevron className="-mr-[3px] text-[#ccc]" />
      </div>
      <div className="h-[54px] pt-[13px]">Account</div>
      <div className="h-[54px] pt-[13px]">Order qty</div>
      <div className={`${field} ${dark}`}>
        APEX-297…
        <Chevron className="-mr-[3px] text-[#ccc]" />
      </div>
      <div className={`${field} border-white bg-black`}>
        <span className="pl-[6px]">2</span>
        <div className="-mr-[4px] flex items-center gap-2">
          <svg width={24} height={28} viewBox="0 0 24 28" fill="currentColor">
            <path d="M1 2H23V8H1Z" fill="none" stroke="currentColor" strokeWidth={2} />
            <path d="M1 11h4v4h-4zM7 11h4v4h-4zM13 11h4v4h-4zM19 11h4v4h-4zM1 17h4v4h-4zM7 17h4v4h-4zM13 17h4v4h-4zM1 23h4v4h-4zM7 23h4v4h-4zM13 23h4v4h-4zM19 17h4v10h-4z" />
          </svg>
          <svg width={16} height={28} viewBox="0 0 16 28" fill="currentColor">
            <path d="M8 1L15 8V10H11L8 7L5 10H1V8ZM8 27L15 20V18H11L8 21L5 18H1V20Z" />
          </svg>
        </div>
      </div>
      <div className="col-span-2 h-[55px] pt-[15px]">ATM Strategy</div>
      <div className={`${field} ${dark} col-span-2`}>
        <div className="flex items-center">
          <span className="w-[58px] pl-[7px] font-['Liberation_Serif',serif] text-[28px] font-bold">i</span>
          <span>2</span>
        </div>
        <Chevron className="-mr-[3px] text-[#ccc]" />
      </div>
    </div>
    <div className="mt-[14px] grid grid-cols-[35px_157px_1fr] gap-y-[13px]">
      <span>A:</span>
      <span>4438.50</span>
      <span>45</span>
      <span>B:</span>
      <span>4438.25</span>
      <span>96</span>
    </div>
  </div>
);

// window that sits behind the chart, only its tab strip is visible
const BackTabs = () => (
  <div className="flex h-[14px] w-full overflow-hidden bg-[#4d4d4d] pl-4">
    {Array.from({ length: 22 }, (_, i) => (
      <div key={i} className={`h-7 w-[149.3px] shrink-0 rounded-t-[12px] bg-linear-to-b ${i === 17 ? "from-[#606060] to-[#777]" : "from-[#404040] to-[#303030]"}`} />
    ))}
    <div className="ml-[26px] mt-[5px] h-5 w-[38px] shrink-0 rounded-t-full bg-[#383838]" />
    <div className="ml-auto flex w-[355px] shrink-0 gap-[90px] bg-[#111] pl-[90px]">
      <div className="w-[2px] bg-[#4d4d4d]" />
      <div className="w-[2px] bg-[#4d4d4d]" />
      <div className="w-[2px] bg-[#4d4d4d]" />
    </div>
  </div>
);

export default function App() {
  return (
    <div className="h-[1839px] w-[3828px] overflow-hidden bg-black font-['Liberation_Sans',Arial,sans-serif]">
      <BackTabs />
      <div className="flex h-[1825px]">
        <div className="flex w-[3823px] flex-col border-x-2 border-[#b0b0b0]">
          <TitleBar />
          <div className="flex-1 bg-black">
            <div className="h-3 bg-linear-to-r from-black via-[#404040] via-50% to-black" />
            <div className="flex gap-3 bg-linear-to-r from-black from-90% via-[#151515] via-91% to-black pl-3">
              <Chart />
              <OrderPanel />
            </div>
            <div className="-mt-[2px] flex pl-[52px]">
              <div className="relative h-[51px] w-[187px] border-2 border-t-0 border-white bg-linear-to-b from-black from-25% to-[#888] pl-[13px] text-[26px] leading-[44px] font-bold text-[#ccc]">
                MES SEP23
              </div>
              <div className="mt-[2px] flex h-[43px] w-[46px] items-center justify-center bg-linear-to-b from-[#999] to-[#ccc] to-30%">
                <svg width={22} height={22} viewBox="0 0 22 22" stroke="#000" strokeWidth={4}>
                  <path d="M0 11H22M11 0V22" />
                </svg>
              </div>
            </div>
          </div>
        </div>
        <div className="flex flex-1 flex-col bg-[#ececec]">
          <div className="h-[44px] bg-[#0b0b0b]" />
          <div className="h-[66px] bg-[#222]" />
          <div className="h-[94px] bg-[#333]" />
          <div className="h-[932px]" />
          <div className="h-[277px] bg-[#bfbfbf]" />
        </div>
      </div>
    </div>
  );
}
